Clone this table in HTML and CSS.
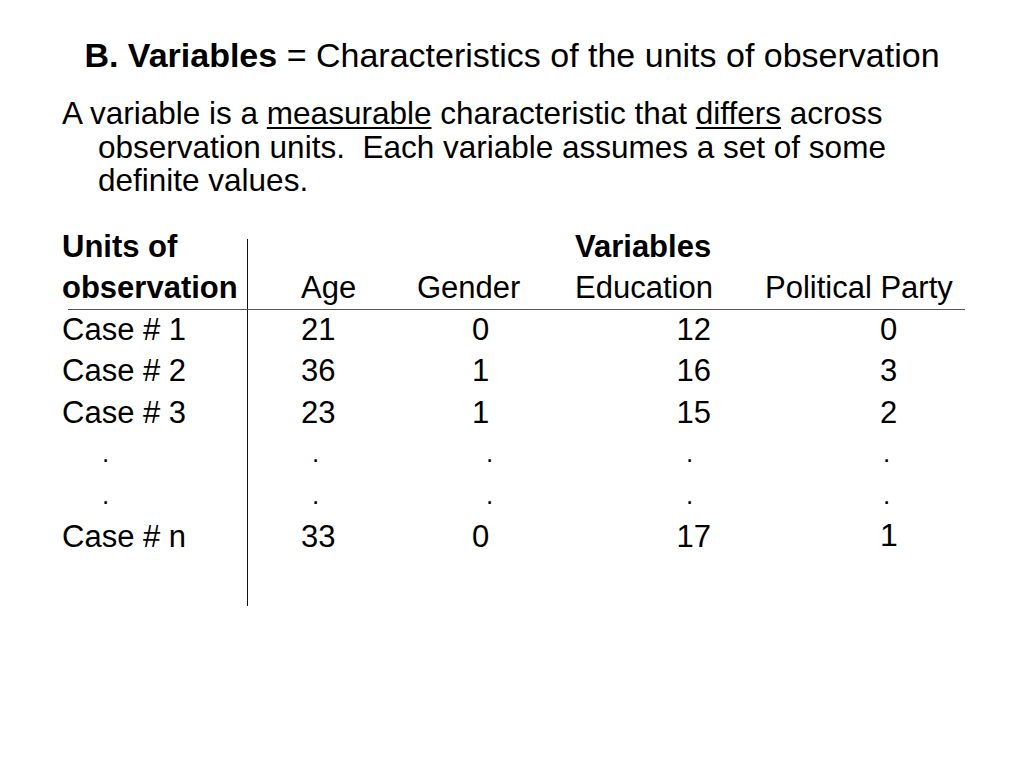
FILE: index.html
```html
<!DOCTYPE html>
<html>
<head>
<meta charset="utf-8">
<link rel="stylesheet" href="styles.css">
</head>
<body>
<div class="slide">
  <h1 class="title"><b>B. Variables</b> = Characteristics of the units of observation</h1>
  <p class="intro">A variable is a <u>measurable</u> characteristic that <u>differs</u> across observation units.&nbsp; Each variable assumes a set of some definite values.</p>
  <div class="table">
    <div class="row head first">
      <div class="c1 bold">Units of</div>
      <div class="c2"></div><div class="c3"></div>
      <div class="c4 bold right">Variables</div>
      <div class="c5"></div>
    </div>
    <div class="row head rule">
      <div class="c1 bold">observation</div>
      <div class="c2">Age</div>
      <div class="c3">Gender</div>
      <div class="c4">Education</div>
      <div class="c5">Political Party</div>
    </div>
    <div class="row">
      <div class="c1">Case # 1</div><div class="c2">21</div><div class="c3 num">0</div><div class="c4 right">12</div><div class="c5 num">0</div>
    </div>
    <div class="row">
      <div class="c1">Case # 2</div><div class="c2">36</div><div class="c3 num">1</div><div class="c4 right">16</div><div class="c5 num">3</div>
    </div>
    <div class="row">
      <div class="c1">Case # 3</div><div class="c2">23</div><div class="c3 num">1</div><div class="c4 right">15</div><div class="c5 num">2</div>
    </div>
    <div class="row dots">
      <div class="c1">.</div><div class="c2">.</div><div class="c3">.</div><div class="c4">.</div><div class="c5">.</div>
    </div>
    <div class="row dots">
      <div class="c1">.</div><div class="c2">.</div><div class="c3">.</div><div class="c4">.</div><div class="c5">.</div>
    </div>
    <div class="row">
      <div class="c1">Case # n</div><div class="c2">33</div><div class="c3 num">0</div><div class="c4 right">17</div><div class="c5 num big">1</div>
    </div>
    <div class="row tail">
      <div class="c1"></div><div class="c2"></div><div class="c3"></div><div class="c4"></div><div class="c5"></div>
    </div>
  </div>
</div>
</body>
</html>
```

FILE: styles.css
```css
html, body {
  margin: 0;
  padding: 0;
  background: #ffffff;
}
body {
  font-family: "Liberation Sans", Arial, sans-serif;
  color: #000;
  width: 1024px;
  height: 768px;
  overflow: hidden;
}
.slide {
  padding-top: 35px;
}
.title {
  margin: 0;
  font-weight: normal;
  font-size: 34px;
  line-height: 40px;
  text-align: center;
}
.title b {
  font-weight: bold;
}
.intro {
  margin: 22px 0 0 62px;
  width: 830px;
  padding-left: 36px;
  text-indent: -36px;
  font-size: 31.5px;
  line-height: 33.5px;
}
.intro u {
  text-decoration-thickness: 2px;
  text-underline-offset: 3px;
}
.table {
  margin: 28px 0 0 62px;
  font-size: 31px;
}
.row {
  display: grid;
  grid-template-columns: 186px 169px 158px 190px 200px;
  height: 41.5px;
  line-height: 41.5px;
}
.c1 {
  border-right: 1px solid #111;
  white-space: nowrap;
}
.first .c1 {
  border-right: none;
  position: relative;
}
.first .c1::after {
  content: "";
  position: absolute;
  right: 0;
  top: 13px;
  bottom: 0;
  border-right: 1px solid #111;
}
.c2 { padding-left: 53px; }
.c4, .c5 { white-space: nowrap; }
.bold { font-weight: bold; }
.right { text-align: right; padding-right: 54px; }
.c3.num { padding-left: 55px; }
.c5.num { padding-left: 115px; }
.big { font-size: 32px; line-height: 38px; }
.rule {
  position: relative;
}
.rule::after {
  content: "";
  position: absolute;
  left: 6px;
  width: 897px;
  bottom: -1px;
  border-bottom: 1px solid #555;
}
.dots { font-size: 26px; }
.dots .c1 { padding-left: 40px; }
.dots .c2 { padding-left: 64px; }
.dots .c3 { padding-left: 69px; }
.dots .c4 { padding-left: 111px; }
.dots .c5 { padding-left: 118px; }
.tail { height: 48px; }
```
